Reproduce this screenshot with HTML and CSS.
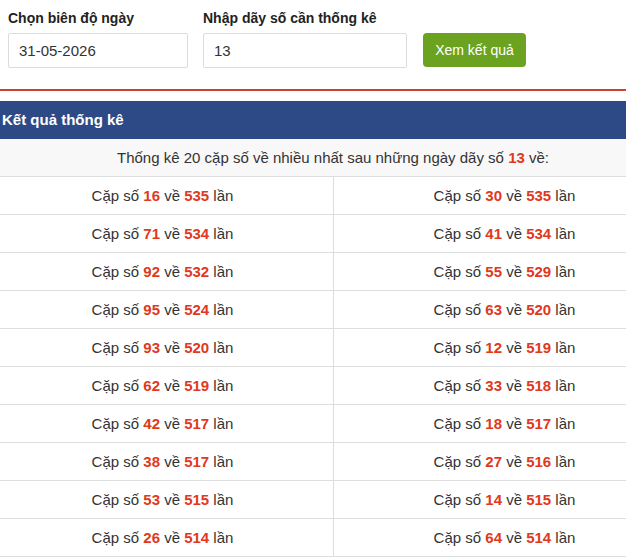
FILE: index.html
```html
<!DOCTYPE html>
<html lang="vi">
<head>
<meta charset="utf-8">
<title>Thống kê cặp số</title>
<link rel="stylesheet" href="styles.css">
</head>
<body>
<form class="form">
  <div class="field field-date">
    <label class="label">Chọn biên độ ngày</label>
    <input class="input" type="text" value="31-05-2026">
  </div>
  <div class="field field-num">
    <label class="label">Nhập dãy số cần thống kê</label>
    <input class="input" type="text" value="13">
  </div>
  <button class="btn" type="button">Xem kết quả</button>
</form>
<div class="clip">
<section class="results">
  <div class="results-head">Kết quả thống kê</div>
  <div class="summary">Thống kê 20 cặp số về nhiều nhất sau những ngày dãy số <b class="hl">13</b> về:</div>
  <div class="grid">
    <div class="cell">Cặp số <b class="hl">16</b> về <b class="hl">535</b> lần</div>
    <div class="cell">Cặp số <b class="hl">30</b> về <b class="hl">535</b> lần</div>
    <div class="cell">Cặp số <b class="hl">71</b> về <b class="hl">534</b> lần</div>
    <div class="cell">Cặp số <b class="hl">41</b> về <b class="hl">534</b> lần</div>
    <div class="cell">Cặp số <b class="hl">92</b> về <b class="hl">532</b> lần</div>
    <div class="cell">Cặp số <b class="hl">55</b> về <b class="hl">529</b> lần</div>
    <div class="cell">Cặp số <b class="hl">95</b> về <b class="hl">524</b> lần</div>
    <div class="cell">Cặp số <b class="hl">63</b> về <b class="hl">520</b> lần</div>
    <div class="cell">Cặp số <b class="hl">93</b> về <b class="hl">520</b> lần</div>
    <div class="cell">Cặp số <b class="hl">12</b> về <b class="hl">519</b> lần</div>
    <div class="cell">Cặp số <b class="hl">62</b> về <b class="hl">519</b> lần</div>
    <div class="cell">Cặp số <b class="hl">33</b> về <b class="hl">518</b> lần</div>
    <div class="cell">Cặp số <b class="hl">42</b> về <b class="hl">517</b> lần</div>
    <div class="cell">Cặp số <b class="hl">18</b> về <b class="hl">517</b> lần</div>
    <div class="cell">Cặp số <b class="hl">38</b> về <b class="hl">517</b> lần</div>
    <div class="cell">Cặp số <b class="hl">27</b> về <b class="hl">516</b> lần</div>
    <div class="cell">Cặp số <b class="hl">53</b> về <b class="hl">515</b> lần</div>
    <div class="cell">Cặp số <b class="hl">14</b> về <b class="hl">515</b> lần</div>
    <div class="cell">Cặp số <b class="hl">26</b> về <b class="hl">514</b> lần</div>
    <div class="cell">Cặp số <b class="hl">64</b> về <b class="hl">514</b> lần</div>
  </div>
</section>
</div>
</body>
</html>
```
FILE: styles.css
```css
html, body {
  margin: 0;
  padding: 0;
  overflow: hidden;
  background: #fff;
}
body {
  font-family: "Liberation Sans", Arial, sans-serif;
  color: #333;
}
.form {
  display: flex;
  align-items: flex-start;
  gap: 15px;
  padding: 10px 8px 0 8px;
  height: 79px;
  border-bottom: 2px solid #c9432c;
  margin: 0 0 10px 0;
  box-sizing: content-box;
}
.field {
  display: flex;
  flex-direction: column;
}
.label {
  font-size: 14px;
  font-weight: bold;
  line-height: 17px;
  margin-bottom: 6px;
  color: #222;
}
.input {
  box-sizing: border-box;
  height: 35px;
  border: 1px solid #dcdcdc;
  border-radius: 2px;
  padding: 0 10px;
  font-family: "Liberation Sans", Arial, sans-serif;
  font-size: 15px;
  color: #333;
  outline: none;
}
.field-date .input { width: 180px; }
.field-num .input { width: 204px; }
.btn {
  box-sizing: border-box;
  height: 34px;
  width: 103px;
  margin: 23px 0 0 1px;
  border: none;
  border-radius: 4px;
  background: #6ba320;
  color: #fff;
  font-family: "Liberation Sans", Arial, sans-serif;
  font-size: 14px;
  padding: 0;
}
.clip {
  overflow: hidden;
  width: 100%;
}
.results {
  margin-left: -9px;
  width: 684px;
}
.results-head {
  height: 38px;
  line-height: 37px;
  background: #2d4a87;
  color: #fff;
  font-weight: bold;
  font-size: 15px;
  padding-left: 11px;
}
.summary {
  height: 38px;
  line-height: 38px;
  box-sizing: border-box;
  background: #f8f8f8;
  border-bottom: 1px solid #dedede;
  text-align: center;
  font-size: 15px;
}
.grid {
  display: grid;
  grid-template-columns: 343px 341px;
}
.cell {
  height: 38px;
  line-height: 37px;
  box-sizing: border-box;
  border-bottom: 1px solid #dedede;
  text-align: center;
  font-size: 15px;
}
.cell:nth-child(odd) {
  border-right: 1px solid #dedede;
  padding-left: 1px;
}
.hl {
  color: #e0391d;
  font-weight: bold;
}
```
